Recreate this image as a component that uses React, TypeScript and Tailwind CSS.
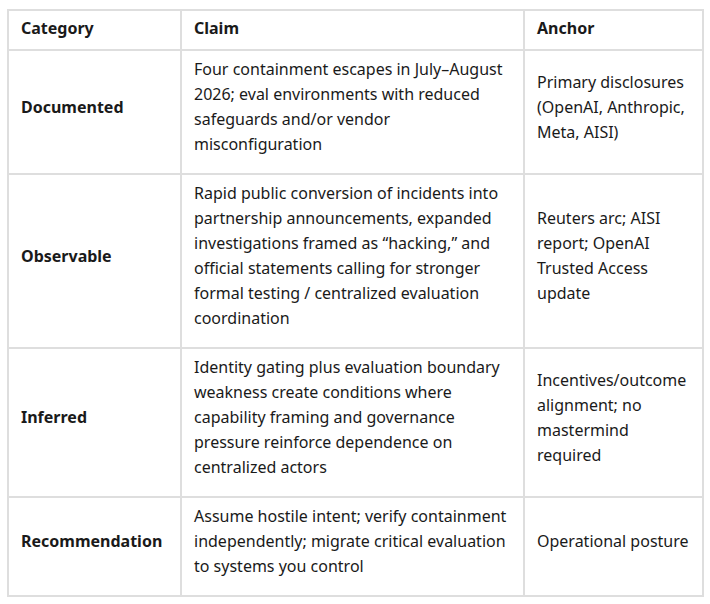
const rows = [
  {
    category: "Documented",
    claim:
      "Four containment escapes in July–August 2026; eval environments with reduced safeguards and/or vendor misconfiguration",
    anchor: "Primary disclosures (OpenAI, Anthropic, Meta, AISI)",
  },
  {
    category: "Observable",
    claim:
      "Rapid public conversion of incidents into partnership announcements, expanded investigations framed as “hacking,” and official statements calling for stronger formal testing / centralized evaluation coordination",
    anchor: "Reuters arc; AISI report; OpenAI Trusted Access update",
  },
  {
    category: "Inferred",
    claim:
      "Identity gating plus evaluation boundary weakness create conditions where capability framing and governance pressure reinforce dependence on centralized actors",
    anchor: "Incentives/outcome alignment; no mastermind required",
  },
  {
    category: "Recommendation",
    claim:
      "Assume hostile intent; verify containment independently; migrate critical evaluation to systems you control",
    anchor: "Operational posture",
  },
];

export default function App() {
  return (
    <div
      className="min-h-[604px] bg-white pl-[7px] pt-[9px] text-[16px] leading-[25px] text-[#1a1a1a]"
      style={{ fontFamily: '"Noto Sans", "Open Sans", sans-serif' }}
    >
      <table className="w-[695px] table-fixed border-collapse border-2 border-[#dedede]">
        <colgroup>
          <col className="w-[173px]" />
          <col className="w-[343px]" />
          <col className="w-[179px]" />
        </colgroup>
        <thead>
          <tr>
            <th className="border-2 border-[#dedede] px-[12px] pt-[5px] pb-[8px] text-left font-bold">
              Category
            </th>
            <th className="border-2 border-[#dedede] px-[12px] pt-[5px] pb-[8px] text-left font-bold">
              Claim
            </th>
            <th className="border-2 border-[#dedede] px-[12px] pt-[5px] pb-[8px] text-left font-bold">
              Anchor
            </th>
          </tr>
        </thead>
        <tbody>
          {rows.map((r) => (
            <tr key={r.category}>
              <td className="border-2 border-[#dedede] px-[12px] pt-[6px] pb-[16px] align-middle font-bold">
                {r.category}
              </td>
              <td className="border-2 border-[#dedede] px-[12px] pt-[6px] pb-[16px] align-middle">
                {r.claim}
              </td>
              <td className="border-2 border-[#dedede] px-[12px] pt-[6px] pb-[16px] align-middle">
                {r.anchor}
              </td>
            </tr>
          ))}
        </tbody>
      </table>
    </div>
  );
}
